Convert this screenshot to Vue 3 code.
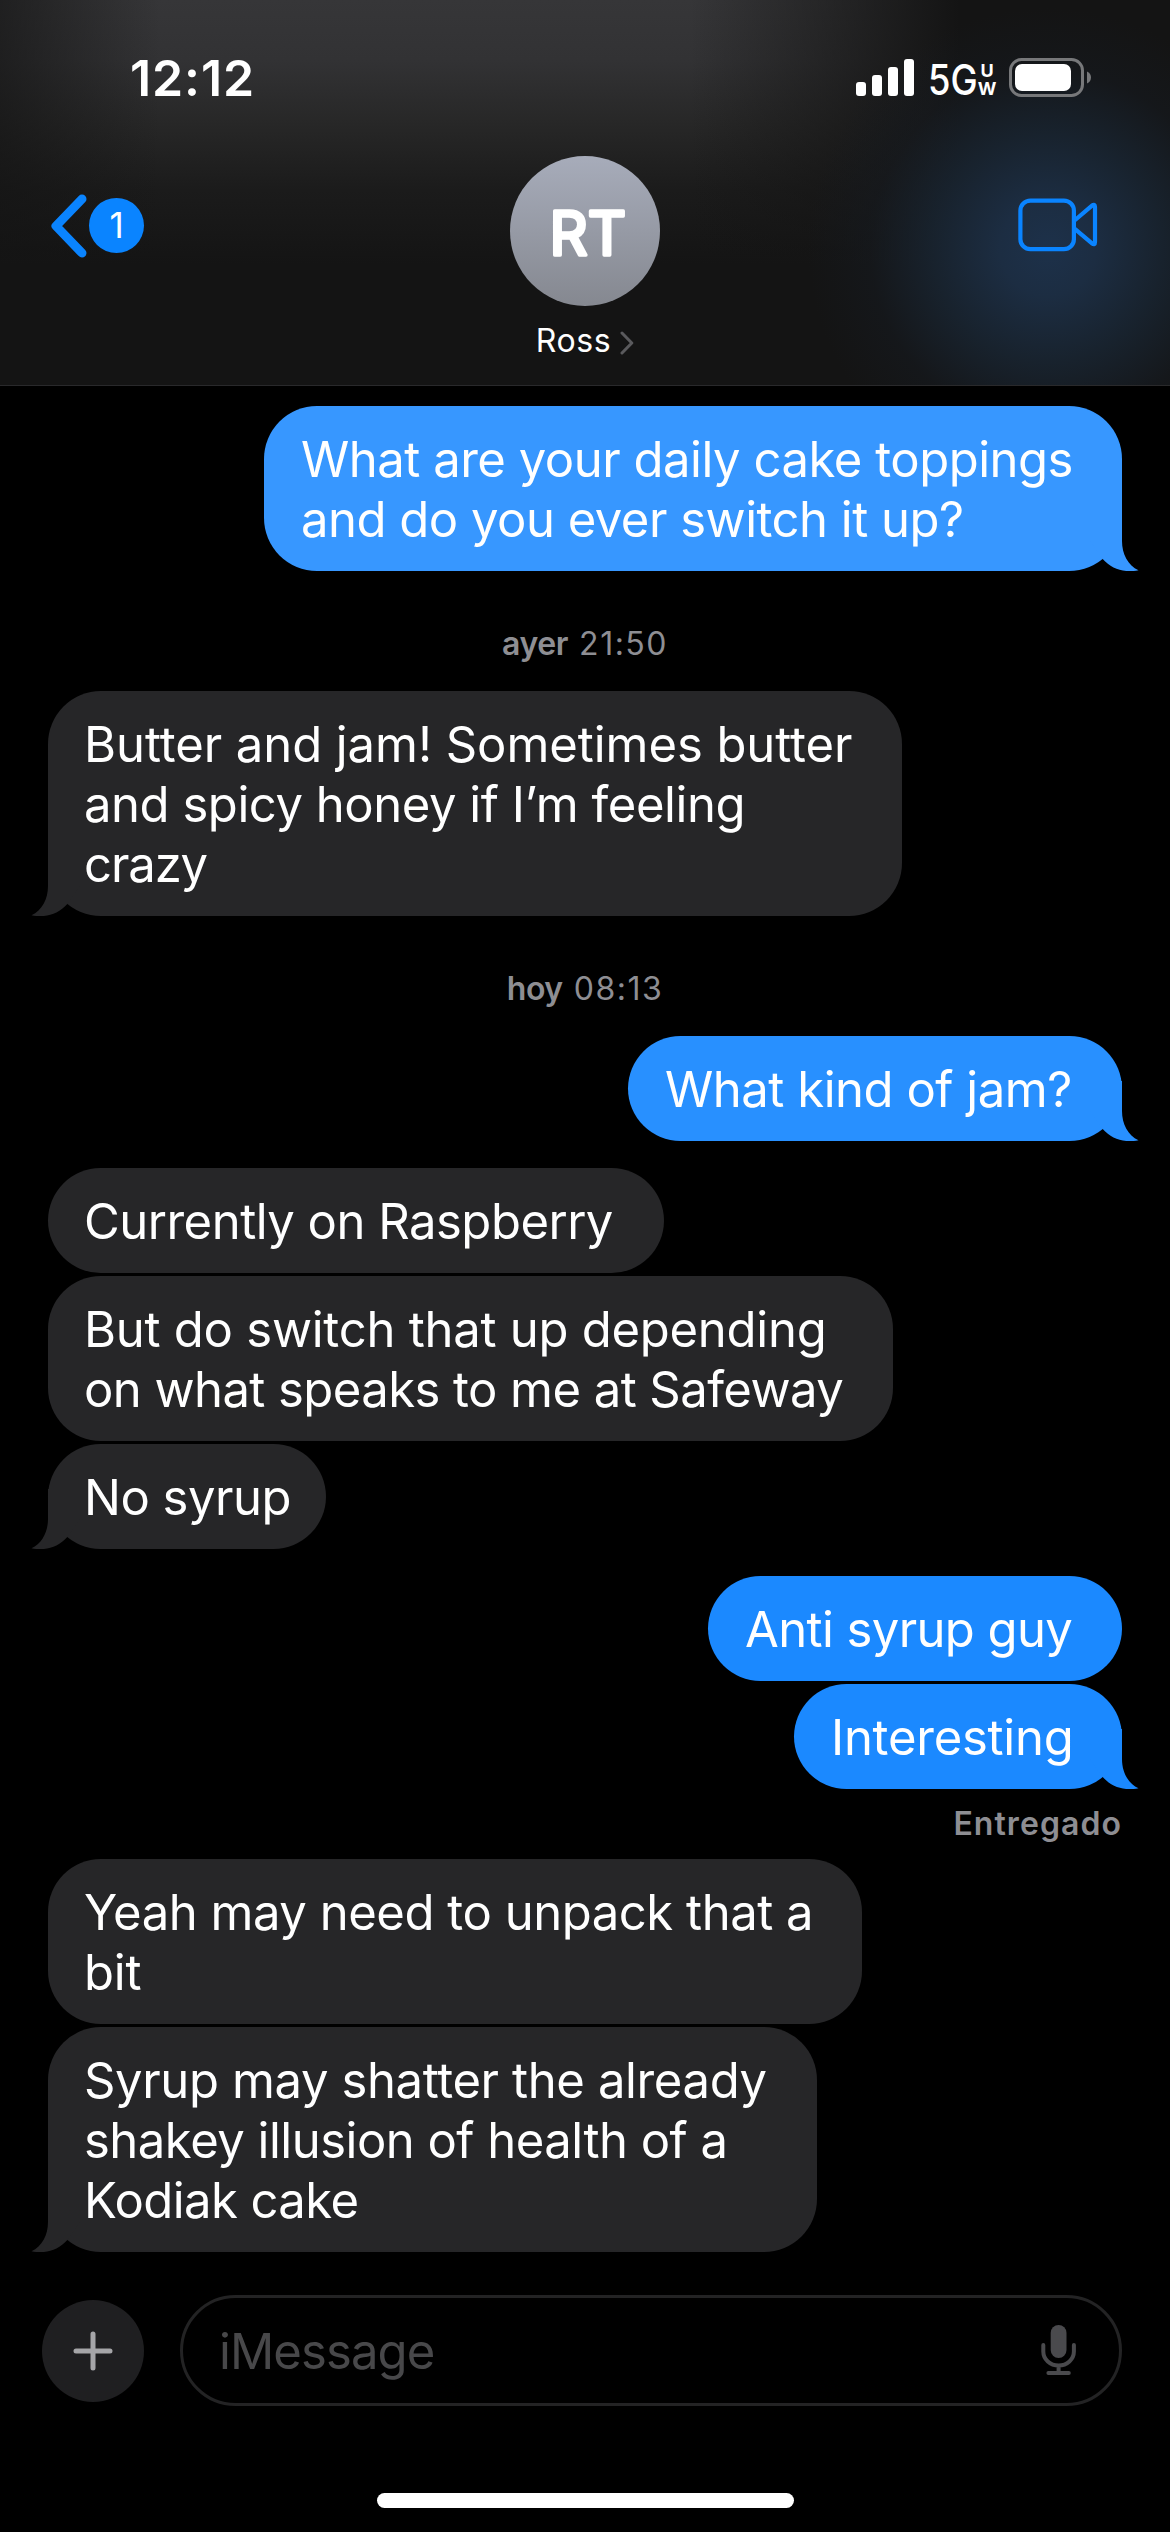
<script setup>
const thread = [
  {
    kind: 'sent',
    bubbles: [
      {
        width: 858,
        tone: 'light',
        tail: true,
        lines: [
          ['What are your daily cake toppings', -0.481],
          ['and do you ever switch it up?', -0.497],
        ],
      },
    ],
  },
  { kind: 'stamp', day: 'ayer', time: '21:50' },
  {
    kind: 'received',
    bubbles: [
      {
        width: 854,
        tail: true,
        lines: [
          ['Butter and jam! Sometimes butter', -0.06],
          ['and spicy honey if I’m feeling', -0.451],
          ['crazy', -1.1],
        ],
      },
    ],
  },
  { kind: 'stamp', day: 'hoy', time: '08:13' },
  {
    kind: 'sent',
    bubbles: [
      { width: 494, tone: 'mid', tail: true, lines: [['What kind of jam?', -0.467]] },
    ],
  },
  {
    kind: 'received',
    spaced: true,
    bubbles: [
      { width: 616, lines: [['Currently on Raspberry', -0.5]] },
      {
        width: 845,
        lines: [
          ['But do switch that up depending', -0.25],
          ['on what speaks to me at Safeway', -0.56],
        ],
      },
      { width: 278, tail: true, lines: [['No syrup', -0.5]] },
    ],
  },
  {
    kind: 'sent',
    spaced: true,
    bubbles: [
      { width: 414, tone: 'deep', lines: [['Anti syrup guy', -0.6]] },
      { width: 328, tone: 'deep', tail: true, lines: [['Interesting', -0.244]] },
    ],
  },
  { kind: 'receipt', text: 'Entregado' },
  {
    kind: 'received',
    bubbles: [
      {
        width: 814,
        lines: [
          ['Yeah may need to unpack that a', -0.457],
          ['bit', -0.185],
        ],
      },
      {
        width: 769,
        tail: true,
        lines: [
          ['Syrup may shatter the already', -0.372],
          ['shakey illusion of health of a', -0.5],
          ['Kodiak cake', -0.57],
        ],
      },
    ],
  },
]
</script>

<template>
  <div class="phone">
    <header class="header">
      <div class="status">
        <span class="clock">12:12</span>
        <div class="indicators">
          <svg class="signal" width="58" height="37" viewBox="0 0 58 37" fill="#fff">
            <rect x="0" y="23" width="10" height="14" rx="3" />
            <rect x="16" y="16" width="10" height="21" rx="3" />
            <rect x="32" y="8" width="10" height="29" rx="3" />
            <rect x="48" y="0" width="10" height="37" rx="3" />
          </svg>
          <div class="network">
            <span class="gen">5G</span>
            <span class="band"><span>U</span><span>W</span></span>
          </div>
          <svg class="battery" width="82" height="39" viewBox="0 0 82 39">
            <rect x="1.5" y="1.5" width="72" height="36" rx="11" fill="none" stroke="#77787a" stroke-width="3" />
            <rect x="6" y="6" width="56" height="27" rx="7" fill="#fff" />
            <path d="M78 13.5c2.400 1 4 3.300 4 6s-1.600 5-4 6z" fill="#77787a" />
          </svg>
        </div>
      </div>

      <nav class="nav">
        <div class="back">
          <svg width="38" height="64" viewBox="0 0 38 64" fill="none" stroke="#0a84ff" stroke-width="9" stroke-linecap="round" stroke-linejoin="round">
            <path d="M32 5 6 32l26 27" />
          </svg>
          <span class="unread">1</span>
        </div>
        <div class="avatar">
          <svg width="150" height="150" viewBox="0 0 150 150">
            <text
              class="initials"
              x="39.500"
              y="98.500"
              textLength="76.500"
              lengthAdjust="spacingAndGlyphs"
            >RT</text>
          </svg>
        </div>
        <svg class="video" width="80" height="54" viewBox="0 0 80 54" fill="none" stroke="#0a84ff" stroke-width="4.200" stroke-linejoin="round">
          <rect x="2.400" y="2.600" width="53.500" height="48.600" rx="10" />
          <path d="M56.500 22.500 74 7.600q3-2 3 1.500v34.800q0 3.500-3 1.500L56.500 30.700" />
        </svg>
      </nav>

      <div class="contact">
        <span>Ross</span>
        <svg width="14" height="24" viewBox="0 0 14 24" fill="none" stroke="#5a5a5d" stroke-width="3" stroke-linecap="round" stroke-linejoin="round">
          <path d="M2 2l9.800 10L2 22" />
        </svg>
      </div>
    </header>

    <main class="chat">
      <template v-for="(item, i) in thread" :key="i">
        <p v-if="item.kind === 'stamp'" class="stamp">
          <b>{{ item.day }}</b><span>{{ item.time }}</span>
        </p>
        <p v-else-if="item.kind === 'receipt'" class="receipt">{{ item.text }}</p>
        <section v-else class="group" :class="[item.kind, { spaced: item.spaced }]">
          <div
            v-for="(b, j) in item.bubbles"
            :key="j"
            class="bubble"
            :class="b.tone"
            :style="{ width: b.width + 'px' }"
          >
            <span
              v-for="[text, tracking] in b.lines"
              :key="text"
              class="line"
              :style="{ letterSpacing: tracking + 'px' }"
            >{{ text }}</span>
            <svg v-if="b.tail" class="tail" width="60" height="60" viewBox="0 0 60 60">
              <path d="M40 0V30C40 43 46 54.500 56.500 59.300C43 62 30 58.500 20.700 48L8 30V0Z" />
            </svg>
          </div>
        </section>
      </template>
    </main>

    <footer class="composer">
      <button class="add" type="button" aria-label="+">
        <svg width="40" height="40" viewBox="0 0 40 40" stroke="#a5a5a8" stroke-width="5" stroke-linecap="round">
          <path d="M20 3v34M3 20h34" />
        </svg>
      </button>
      <div class="field">
        <span class="placeholder">iMessage</span>
        <svg width="36" height="51" viewBox="0 0 36 51" fill="none" stroke="#4a4a4d" stroke-width="4" stroke-linecap="round">
          <rect x="9.700" y="0" width="15.800" height="33" rx="7.900" fill="#4a4a4d" stroke="none" />
          <path d="M2.300 20v6.500a15.200 14 0 0 0 30.600 0V20M17.600 41v6.500M7.400 48h20.400" />
        </svg>
      </div>
    </footer>
    <div class="home-bar"></div>
  </div>
</template>

<style>
body {
  margin: 0;
  background: #000;
}
</style>

<style scoped>
.phone {
  display: flex;
  flex-direction: column;
  width: 1170px;
  height: 2532px;
  overflow: hidden;
  background: #000;
  color: #fff;
  font-family: Inter, 'Liberation Sans', sans-serif;
}

.header {
  box-sizing: border-box;
  flex: none;
  height: 386px;
  border-bottom: 1px solid #29292b;
  background:
    radial-gradient(circle 240px at 1048px 248px, #1d314a 0%, #1c2d42 20%, rgba(25, 38, 52, 0.78) 48%, rgba(22, 28, 36, 0.4) 74%, rgba(20, 20, 20, 0) 100%),
    linear-gradient(90deg, rgba(20, 20, 20, 0.65) 0, rgba(20, 20, 20, 0) 160px, rgba(20, 20, 20, 0) 690px, rgba(20, 20, 20, 0.5) 830px, #141414 960px),
    linear-gradient(180deg, #363638 0, #323234 60px, #272727 125px, #1b1b1b 190px, #141414 265px, #141414 100%);
}

.status {
  display: flex;
  justify-content: space-between;
  box-sizing: border-box;
  height: 156px;
  padding: 58px 79px 0 130px;
}

.clock {
  font-size: 50px;
  font-weight: 600;
  line-height: 40px;
  letter-spacing: 0.9px;
}

.indicators {
  display: flex;
  align-items: flex-start;
}

.signal {
  margin: 1px 14px 0 0;
}

.network {
  display: flex;
  width: 81px;
  height: 39px;
}

.gen {
  width: 49px;
  font-size: 42px;
  font-weight: 500;
  line-height: 43px;
  transform: scaleX(0.865);
  transform-origin: 0 50%;
}

.band {
  display: flex;
  flex-direction: column;
  width: 20px;
  margin-top: 4px;
  align-items: center;
  font-size: 18px;
  font-weight: 700;
  line-height: 18px;
}

.nav {
  display: grid;
  grid-template-columns: 1fr 150px 1fr;
  align-items: center;
  height: 150px;
  padding: 0 72px 0 50px;
}

.back {
  display: flex;
  align-items: center;
  gap: 1px;
  margin-bottom: 11px;
}

.unread {
  width: 55px;
  height: 55px;
  border-radius: 50%;
  background: #0a84ff;
  font-size: 35px;
  line-height: 55px;
  text-align: center;
}

.avatar {
  width: 150px;
  height: 150px;
  margin-left: 11px;
  border-radius: 50%;
  background: linear-gradient(180deg, #a7acba, #858890);
}

.initials {
  fill: #fff;
  stroke: #fff;
  stroke-width: 3.5px;
  stroke-linejoin: round;
  font-size: 60px;
  font-weight: 400;
}

.video {
  justify-self: end;
  margin-bottom: 13px;
}

.contact {
  display: flex;
  align-items: center;
  justify-content: center;
  gap: 9px;
  height: 40px;
  padding-top: 15px;
  font-size: 32px;
  line-height: 40px;
  letter-spacing: 0.6px;
}

.contact svg {
  margin-top: 3px;
}

.chat {
  flex: none;
  padding: 20px 48px 0;
}

.group {
  display: flex;
  flex-direction: column;
  align-items: flex-start;
  gap: 3px;
}

.sent {
  align-items: flex-end;
}

.spaced {
  margin-top: 27px;
}

.bubble {
  position: relative;
  box-sizing: border-box;
  padding: 24px 0 21px 36px;
  border-radius: 53px;
  background: #262628;
  fill: #262628;
  font-size: 49px;
  line-height: 60px;
  white-space: nowrap;
}

.sent .bubble {
  padding-left: 37px;
}

.line {
  display: block;
}

.light {
  background: #3797ff;
  fill: #3797ff;
}

.mid {
  background: #2890ff;
  fill: #2890ff;
}

.deep {
  background: #1b89ff;
  fill: #1b89ff;
}

.tail {
  position: absolute;
  right: -20px;
  bottom: 0;
}

.received .tail {
  right: auto;
  left: -20px;
  transform: scaleX(-1);
}

.stamp {
  display: flex;
  justify-content: center;
  gap: 11px;
  box-sizing: border-box;
  height: 120px;
  margin: 0;
  padding-top: 53px;
  color: #8e8e93;
  font-size: 32px;
  line-height: 40px;
}

.stamp b {
  font-weight: 600;
  letter-spacing: -0.4px;
}

.stamp span {
  letter-spacing: 1.5px;
}

.receipt {
  box-sizing: border-box;
  height: 70px;
  margin: 0;
  padding-top: 15px;
  color: #8e8e93;
  font-size: 32px;
  font-weight: 600;
  line-height: 40px;
  letter-spacing: 1.06px;
  text-align: right;
}

.composer {
  display: flex;
  align-items: center;
  flex: none;
  gap: 36px;
  height: 111px;
  margin-top: 43px;
  padding: 0 48px 0 42px;
}

.add {
  display: flex;
  align-items: center;
  justify-content: center;
  width: 102px;
  height: 102px;
  padding: 0;
  border: 0;
  border-radius: 50%;
  background: #1f1f21;
}

.field {
  display: flex;
  flex: 1;
  align-items: center;
  justify-content: space-between;
  box-sizing: border-box;
  height: 111px;
  padding: 0 42px 0 36px;
  border: 3px solid #232324;
  border-radius: 56px;
}

.placeholder {
  padding-top: 2px;
  color: #48484a;
  font-size: 49px;
  letter-spacing: -0.9px;
}

.home-bar {
  flex: none;
  width: 417px;
  height: 15px;
  margin: 87px auto 0;
  border-radius: 8px;
  background: #fff;
}
</style>
